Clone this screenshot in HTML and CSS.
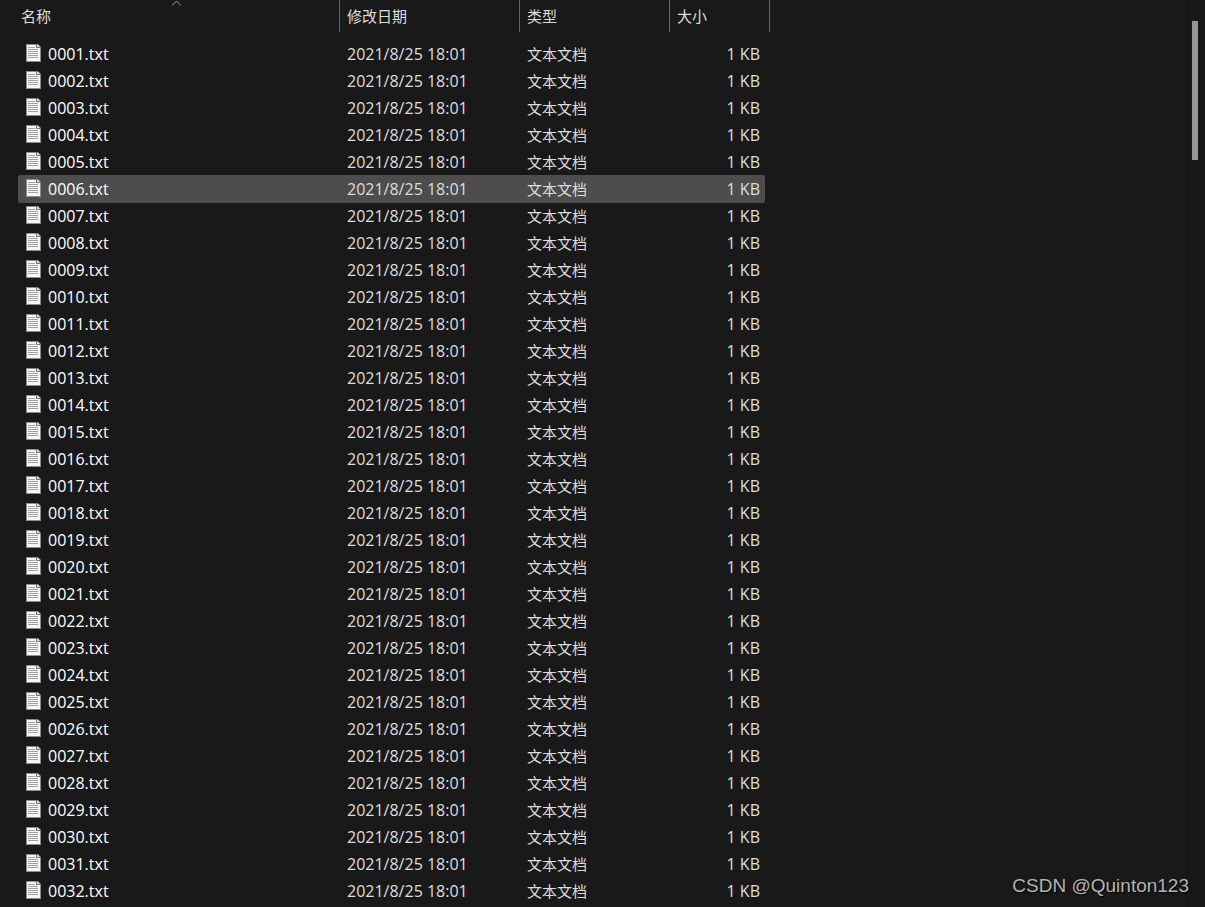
FILE: index.html
```html
<!DOCTYPE html>
<html lang="zh-CN">
<head>
    <meta charset="UTF-8">
    <title>文件列表</title>
    <meta name="viewport" content="width=device-width, initial-scale=1">
    <link rel="stylesheet" href="styles.css">
</head>
<body>
    <svg class="sprite" aria-hidden="true">
        <symbol id="txt-icon" viewBox="0 0 15 18">
            <path d="M0 0h12l3 3v15H0z" fill="#8c8c8c"/>
            <path d="M1 1h9v3h4v13H1z" fill="#f6f6f6"/>
            <path d="M10 0h1v3h4v1h-5z" fill="#777"/>
            <path d="M11 1h1l2 2h-3z" fill="#e2e2e2"/>
            <path d="M2 3.5h7M2 5.5h10M2 7.5h10M2 9.5h10M2 11.5h10M2 13.5h10" stroke="#a2a2a2"/>
        </symbol>
    </svg>
    <div class="explorer">
        <main class="files">
            <table>
                <colgroup>
                    <col class="col-name">
                    <col class="col-date">
                    <col class="col-type">
                    <col class="col-size">
                </colgroup>
                <thead>
                    <tr>
                        <th aria-sort="ascending">
                            <button type="button">名称</button>
                            <svg class="sort" viewBox="0 0 11 6" aria-hidden="true"><path d="M1 5.5l4.5-4.5L10 5.5"/></svg>
                        </th>
                        <th><button type="button">修改日期</button></th>
                        <th><button type="button">类型</button></th>
                        <th><button type="button">大小</button></th>
                    </tr>
                </thead>
                <tbody id="fileList"></tbody>
            </table>
        </main>
        <div class="scrollbar"><div class="thumb"></div></div>
        <div class="watermark">CSDN @Quinton123</div>
    </div>
    <script>
        const fileList = document.getElementById('fileList');
        const fileCount = 32;
        const selected = 6;

        for (let i = 1; i <= fileCount; i++) {
            const row = document.createElement('tr');
            if (i === selected) row.className = 'selected';
            row.innerHTML = `
                <td class="name"><div><svg class="icon" aria-hidden="true"><use href="#txt-icon"/></svg>${String(i).padStart(4, '0')}.txt</div></td>
                <td>2021/8/25 18:01</td>
                <td class="type">文本文档</td>
                <td class="size">1 KB</td>`;
            fileList.appendChild(row);
        }
    </script>
</body>
</html>
```

FILE: styles.css
```css
body {
    margin: 0;
    background: #191919;
    color: #dedede;
    font-family: "Open Sans", "Noto Sans CJK SC", sans-serif;
    font-size: 16px;
}
.sprite {
    position: absolute;
    width: 0;
    height: 0;
}
.explorer {
    position: relative;
    display: flex;
    min-height: 100vh;
}
.files {
    flex: 1;
    padding-left: 18px;
}
table {
    table-layout: fixed;
    width: 747px;
    border-collapse: separate;
    border-spacing: 0;
}
.col-name { width: 322px; }
.col-date { width: 180px; }
.col-type { width: 150px; }
.col-size { width: 95px; }

/* Column headers */
th {
    position: relative;
    height: 32px;
    padding: 0;
    text-align: left;
}
th::after {
    content: "";
    position: absolute;
    top: 0;
    right: 0;
    width: 1px;
    height: 32px;
    background: #636363;
}
th:last-child::after {
    right: -5px;
}
th button {
    display: block;
    width: 100%;
    height: 32px;
    padding: 0 0 2px 7px;
    border: none;
    background: none;
    color: #dedede;
    font-family: inherit;
    font-size: 15px;
    text-align: left;
}
th:first-child button {
    padding-left: 3px;
}
.sort {
    position: absolute;
    top: 0;
    left: 153px;
    width: 11px;
    height: 6px;
    fill: none;
    stroke: #a0a0a0;
}

/* Rows */
tbody::before {
    content: "";
    display: block;
    height: 8px;
}
td {
    box-sizing: border-box;
    height: 27px;
    padding: 2px 0 0 7px;
    line-height: 25px;
    white-space: nowrap;
}
.name {
    padding-left: 8px;
    color: #fff;
}
.name div {
    display: flex;
    align-items: flex-start;
    gap: 7px;
    height: 25px;
}
.type {
    font-size: 15px;
}
.size {
    padding-right: 5px;
    text-align: right;
}
.icon {
    width: 15px;
    height: 18px;
    margin-top: 2px;
}
.selected td {
    background: #4d4d4d;
    box-shadow: 0 1px #4d4d4d;
}
.selected td:first-child {
    border-radius: 2px 0 0 2px;
}
.selected td:last-child {
    border-radius: 0 2px 2px 0;
}

.scrollbar {
    width: 20px;
    padding-top: 21px;
    background: #171717;
}
.thumb {
    width: 6px;
    height: 139px;
    margin-left: 7px;
    background: #969696;
}
.watermark {
    position: absolute;
    right: 16px;
    bottom: 9px;
    color: #b4b4b4;
    font-family: "Liberation Sans", sans-serif;
    font-size: 19px;
    line-height: 24px;
    text-shadow: 1px 1px 1px #000;
}
```
